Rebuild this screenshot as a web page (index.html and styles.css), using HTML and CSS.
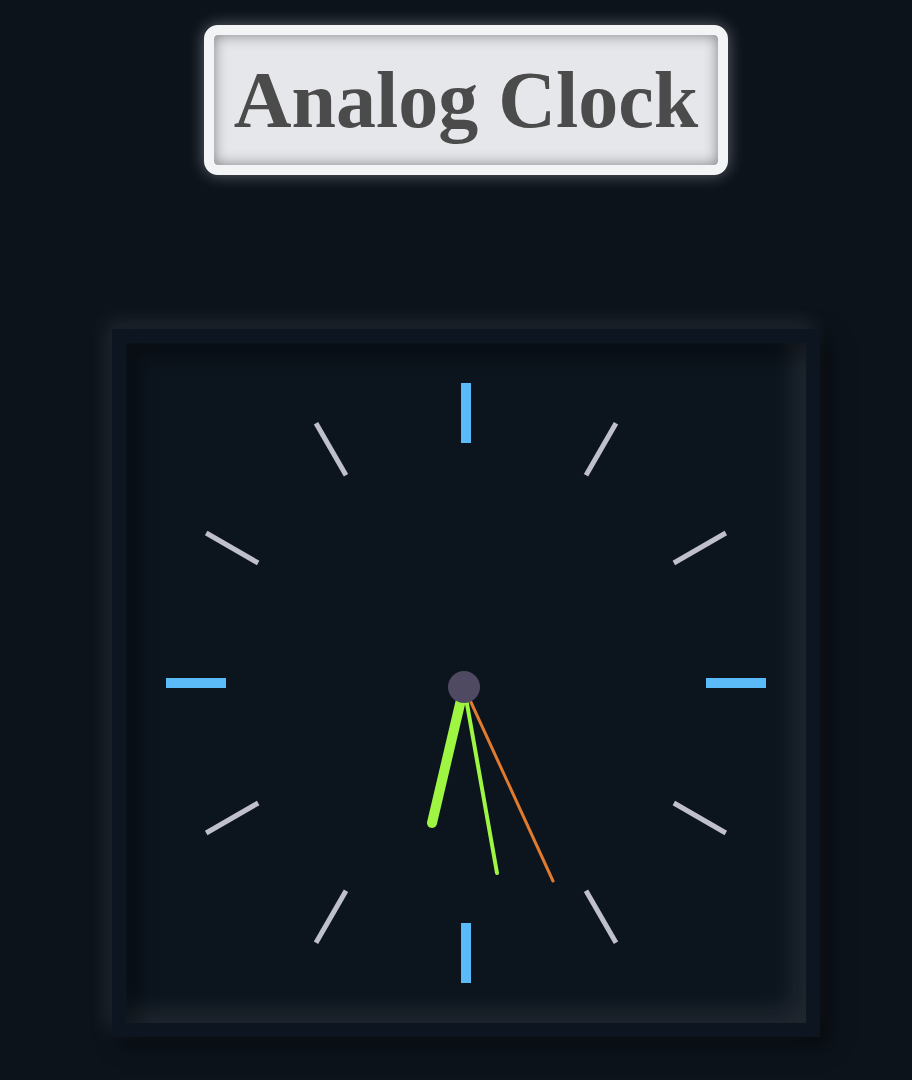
FILE: index.html
```html
<!DOCTYPE html>
<html lang="en">
<head>
<meta charset="utf-8">
<title>Analog Clock</title>
<link rel="stylesheet" href="styles.css">
</head>
<body>
<main class="page">
  <h1 class="title">Analog Clock</h1>
  <div class="clock">
    <div class="face">
      <svg class="dial" width="680" height="680" viewBox="0 0 680 680">
        <g class="major">
          <rect x="335" y="40" width="10" height="60"/>
          <rect x="335" y="580" width="10" height="60"/>
          <rect x="40" y="335" width="60" height="10"/>
          <rect x="580" y="335" width="60" height="10"/>
        </g>
        <g class="minor">
          <line x1="340" y1="40" x2="340" y2="100" transform="rotate(30 340 340)"/>
          <line x1="340" y1="40" x2="340" y2="100" transform="rotate(60 340 340)"/>
          <line x1="340" y1="40" x2="340" y2="100" transform="rotate(120 340 340)"/>
          <line x1="340" y1="40" x2="340" y2="100" transform="rotate(150 340 340)"/>
          <line x1="340" y1="40" x2="340" y2="100" transform="rotate(210 340 340)"/>
          <line x1="340" y1="40" x2="340" y2="100" transform="rotate(240 340 340)"/>
          <line x1="340" y1="40" x2="340" y2="100" transform="rotate(300 340 340)"/>
          <line x1="340" y1="40" x2="340" y2="100" transform="rotate(330 340 340)"/>
        </g>
        <line class="hand-hour" x1="338" y1="344" x2="306" y2="480"/>
        <line class="hand-minute" x1="338" y1="344" x2="371" y2="530"/>
        <line class="hand-second" x1="338" y1="344" x2="427" y2="538"/>
        <circle class="pin" cx="338" cy="344" r="16"/>
      </svg>
    </div>
  </div>
</main>
</body>
</html>
```

FILE: styles.css
```css
html, body {
  margin: 0;
  background: #0c131b;
}

.page {
  display: flex;
  flex-direction: column;
  align-items: center;
  padding: 25px 0 40px 20px;
}

.title {
  margin: 0;
  font-family: "Liberation Serif", "Times New Roman", serif;
  font-weight: bold;
  font-size: 80px;
  line-height: 92px;
  color: #4b4b4b;
  background: #e5e7eb;
  border: 10px solid #f3f4f6;
  border-radius: 14px;
  padding: 19px 20px;
  box-shadow: 0 0 16px rgba(255, 255, 255, 0.35), inset 0 0 14px rgba(0, 0, 0, 0.45);
}

.clock {
  margin-top: 154px;
  padding: 14px;
  background: #0d1620;
  box-shadow: -6px -8px 20px rgba(255, 255, 255, 0.09), 8px 8px 20px rgba(0, 0, 0, 0.5);
}

.face {
  width: 680px;
  height: 680px;
  background: #0c141d;
  box-shadow: inset 12px 12px 20px rgba(0, 0, 0, 0.35), inset -12px -12px 24px rgba(255, 255, 255, 0.09);
}

.dial {
  display: block;
}

.major rect {
  fill: #5bbaf8;
}

.minor line {
  stroke: #c0c0cc;
  stroke-width: 5;
}

.hand-hour {
  stroke: #9ef542;
  stroke-width: 10;
  stroke-linecap: round;
}

.hand-minute {
  stroke: #9ef542;
  stroke-width: 4;
  stroke-linecap: round;
}

.hand-second {
  stroke: #e07a2e;
  stroke-width: 3;
  stroke-linecap: round;
}

.pin {
  fill: #4f4a62;
}
```
